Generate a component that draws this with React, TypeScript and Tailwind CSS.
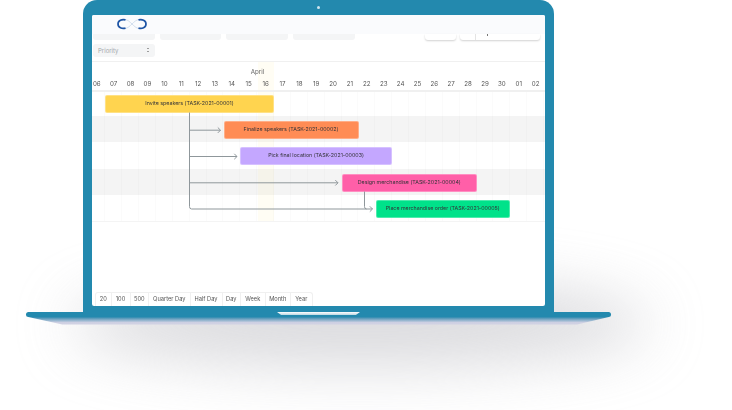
import React from 'react';

const dates = [
  '06', '07', '08', '09', '10', '11', '12', '13', '14', '15', '16', '17', '18', '19',
  '20', '21', '22', '23', '24', '25', '26', '27', '28', '29', '30', '01', '02',
];

const tasks = [
  { label: 'Invite speakers (TASK-2021-00001)', row: 'h-[24.4px] pt-[3.5px]', bar: 'ml-[13px] w-[169px] bg-[#ffd44f]' },
  { label: 'Finalize speakers (TASK-2021-00002)', row: 'h-[26.4px] pt-[5.4px] bg-[#f4f4f4]', bar: 'ml-[131.5px] w-[135px] bg-[#ff8c55]' },
  { label: 'Pick final location (TASK-2021-00003)', row: 'h-[26.4px] pt-[5.2px]', bar: 'ml-[148px] w-[152px] bg-[#c4a7ff]' },
  { label: 'Design merchandise (TASK-2021-00004)', row: 'h-[26.4px] pt-[5.4px] bg-[#f4f4f4]', bar: 'ml-[250px] w-[134.5px] bg-[#ff5fa8]' },
  { label: 'Place merchandise order (TASK-2021-00005)', row: 'h-[26.4px] pt-[5.2px]', bar: 'ml-[283.5px] w-[134.5px] bg-[#00e28a]' },
];

const pageSizes = [
  { label: '20', w: 'w-[15.5px]' },
  { label: '100', w: 'w-[19px]' },
  { label: '500', w: 'w-[18.5px]' },
  { label: 'Quarter Day', w: 'w-[41.5px]' },
  { label: 'Half Day', w: 'w-[32px]' },
  { label: 'Day', w: 'w-[18.5px]' },
  { label: 'Week', w: 'w-[24.5px]' },
  { label: 'Month', w: 'w-[25.5px]' },
  { label: 'Year', w: 'w-[20.5px]' },
];

const Logo = () => (
  <svg width="30" height="12" viewBox="0 0 30 12" fill="none">
    <path d="M8 1.6C13 1.6 17 10.4 22 10.4M8 10.4C13 10.4 17 1.6 22 1.6" stroke="#c9d8ea" strokeWidth="0.8" />
    <path d="M8.5 1.9C5 0.8 1 2.4 1 6C1 9.6 5 11.2 8.5 10.1" stroke="#1f55a5" strokeWidth="1.7" />
    <path d="M21.5 1.9C25 0.8 29 2.4 29 6C29 9.6 25 11.2 21.5 10.1" stroke="#1f55a5" strokeWidth="1.7" />
  </svg>
);

const Arrows = () => (
  <svg
    className="absolute inset-0 z-20 pointer-events-none"
    width="452.5"
    height="291.5"
    viewBox="92 14.5 452.5 291.5"
    fill="none"
    stroke="#8f979b"
    strokeWidth="1"
  >
    <path d="M189.5 112V206Q189.5 208.5 191.5 208.5H372.5" />
    <path d="M364.5 191V206Q364.5 208.5 366.5 208.5" />
    <path d="M189.5 129.7H220.5M217.8 127L220.5 129.7L217.8 132.4" />
    <path d="M189.5 156H237M234.3 153.3L237 156L234.3 158.7" />
    <path d="M189.5 182.3H338M335.3 179.6L338 182.3L335.3 185" />
    <path d="M369.8 205.8L372.5 208.5L369.8 211.2" />
  </svg>
);

export default function App() {
  return (
    <div className="relative w-[732px] h-[410px] overflow-hidden bg-white font-['Inter',sans-serif]">
      {/* soft shadow under the laptop */}
      <div className="absolute left-[70px] top-[282px] w-[580px] h-[84px] rounded-[50%] bg-[#c6c6cb] opacity-65 blur-[30px]" />

      <div className="relative">
        {/* lid */}
        <div className="relative ml-[83px] w-[470.5px] h-[312px] rounded-t-[14px] bg-[#2389ae] px-[9px] pt-[14.5px] pb-[6px]">
          <div className="absolute left-[234px] top-[5.5px] w-[3px] h-[3px] rounded-full bg-[#cfe6ef]" />

          <div className="relative flex flex-col h-full overflow-hidden rounded-[2px] bg-white blur-[0.3px]">
            <div className="h-[19.5px] shrink-0 bg-[#fafbfd] pl-[25px] pt-[3.5px]">
              <Logo />
            </div>

            {/* filters cut off by the header */}
            <div className="flex h-[5.5px] shrink-0 gap-[5px] pl-[1px] pr-[4.5px]">
              <div className="w-[62px] rounded-b-[3px] bg-[#f4f5f6]" />
              <div className="w-[61px] rounded-b-[3px] bg-[#f4f5f6]" />
              <div className="w-[62px] rounded-b-[3px] bg-[#f4f5f6]" />
              <div className="w-[62px] rounded-b-[3px] bg-[#f4f5f6]" />
              <div className="ml-auto w-[31.5px] rounded-b-[3px] bg-white shadow-[0_1px_2px_rgba(0,0,0,0.18)]" />
              <div className="flex w-[80px] ml-[-1px] rounded-b-[3px] bg-white shadow-[0_1px_2px_rgba(0,0,0,0.18)]">
                <div className="w-[16px] border-r border-[#e4e4e4]" />
                <div className="ml-[11px] h-[2px] w-[1px] bg-[#777]" />
              </div>
            </div>

            <div className="mt-[4px] ml-[1px] flex h-[13px] w-[62px] shrink-0 items-center justify-between rounded-[3px] bg-[#f4f5f6] pl-[5px] pr-[5px] text-[6px] text-[#a3a8ad]">
              <span>Priority</span>
              <svg width="4" height="6" viewBox="0 0 4 6" fill="none" stroke="#777" strokeWidth="0.7">
                <path d="M1 2L2 1L3 2M1 4L2 5L3 4" />
              </svg>
            </div>

            {/* gantt */}
            <div className="relative mt-[4.5px] shrink-0 overflow-hidden border-t-[1.5px] border-[#f0f0f0]">
              <div className="absolute inset-y-0 left-[165.5px] z-0 w-[16.5px] bg-[#ffee90]/10" />
              <div className="absolute left-[-3.6px] top-[30px] bottom-0 z-0 flex">
                {dates.map((d) => (
                  <div key={d} className="h-full w-[16.89px] shrink-0 border-r border-black/[0.015]" />
                ))}
              </div>

              <div className="relative z-10 h-[27.5px]">
                <div className="w-[190px] pl-[158px] pt-[4.5px] text-[6.2px] leading-[9px] text-[#666]">
                  <span className="inline-block w-[15px] text-center">April</span>
                </div>
                <div className="mt-[3.5px] ml-[-3.6px] flex">
                  {dates.map((d) => (
                    <div key={d} className="w-[16.89px] shrink-0 text-center text-[6.2px] leading-[9px] text-[#555]">
                      {d}
                    </div>
                  ))}
                </div>
              </div>
              <div className="relative z-10 h-[2px] bg-[#f0f0f0]" />

              <div>
                {tasks.map((t) => (
                  <div key={t.label} className={t.row}>
                    <div className={`relative z-10 flex h-[17.5px] items-center justify-center rounded-[2px] border border-white/30 text-[5.3px] text-[#333338] ${t.bar}`}>
                      {t.label}
                    </div>
                  </div>
                ))}
              </div>
              <div className="relative z-10 h-[1px] bg-[#f4f4f4]" />
            </div>

            {/* page size and view buttons */}
            <div className="mt-auto ml-[3px] flex h-[14px] w-fit rounded-t-[3px] border border-b-0 border-[#f0f0f0]">
              {pageSizes.map((p) => (
                <div
                  key={p.label}
                  className={`flex shrink-0 items-center justify-center whitespace-nowrap border-r border-[#f0f0f0] text-[5.7px] text-[#555] last:border-r-0 ${p.w}`}
                >
                  {p.label}
                </div>
              ))}
            </div>

            <Arrows />
          </div>
        </div>

        {/* base */}
        <div className="relative ml-[26px] w-[585px]">
          <div className="h-[4.5px] rounded-[2.5px] bg-[#2389ae]" />
          <div className="h-[8px] bg-gradient-to-b from-[#2389ae] to-[#d0d1e3] to-70% [clip-path:polygon(0_0,100%_0,94.2%_100%,6.2%_100%)]" />
          <div className="absolute left-[251px] top-0 h-[3px] w-[83px] rounded-b-[3px] bg-gradient-to-b from-white to-[#b9d6e2] [clip-path:polygon(0_0,100%_0,95%_100%,5%_100%)]" />
        </div>
      </div>
    </div>
  );
}
